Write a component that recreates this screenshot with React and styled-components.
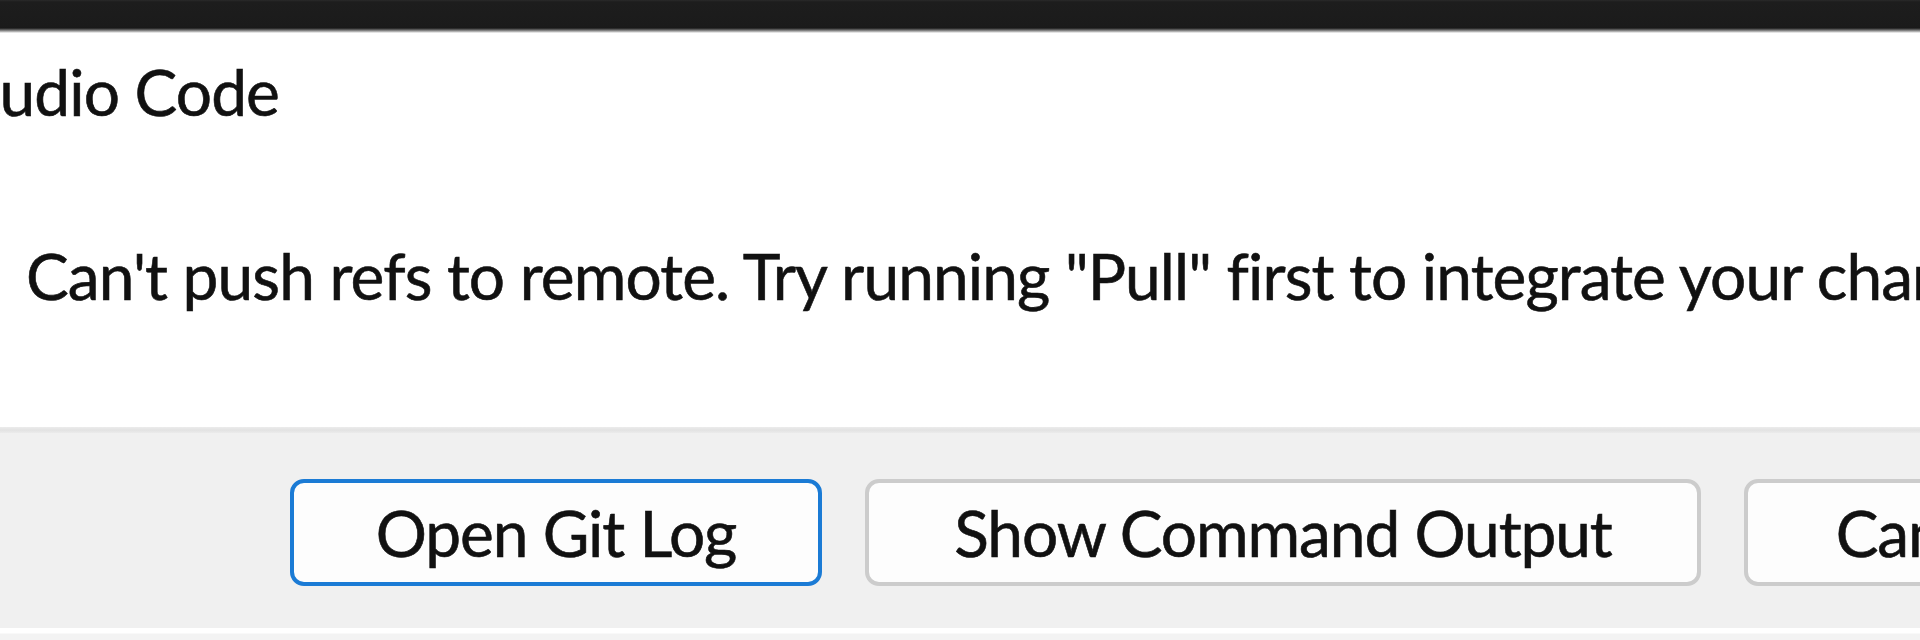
import React from "react";
import styled, { createGlobalStyle } from "styled-components";

const Global = createGlobalStyle`
  html, body { margin: 0; padding: 0; background: #ffffff; }
  body { width: 1920px; height: 640px; overflow: hidden; font-family: Lato, "Open Sans", sans-serif; }
  #root { width: 1920px; height: 640px; }
`;

const Dialog = styled.div`
  width: 1920px;
  height: 640px;
  display: flex;
  flex-direction: column;
  overflow: hidden;
  background: #ffffff;
`;

const TopBar = styled.div`
  height: 33px;
  flex: none;
  background: linear-gradient(
    to bottom,
    #2a2a2a 0px,
    #1d1d1d 2px,
    #1b1b1b 26px,
    #191919 28px,
    #6a6a6a 30px,
    #c8c8c8 32px,
    #ffffff 33px
  );
`;

const Body = styled.div`
  flex: none;
  height: 394px;
  display: flex;
  flex-direction: column;
  padding-top: 19px;
  box-sizing: border-box;
  overflow: hidden;
`;

const Text = styled.div`
  font-size: 64px;
  line-height: 80px;
  letter-spacing: -0.9px;
  color: #111111;
  white-space: nowrap;
  -webkit-text-stroke: 0.6px #111111;
`;

const Title = styled(Text)`
  margin-left: -234px;
`;

const Message = styled(Text)`
  margin-top: 104px;
  padding-left: 26px;
`;

const Separator = styled.div`
  flex: none;
  height: 6px;
  background: linear-gradient(to bottom, #ececec, #e2e2e2 50%, #ebebeb);
`;

const Footer = styled.div`
  flex: none;
  height: 195px;
  box-sizing: border-box;
  background: #f0f0f0;
  display: flex;
  align-items: flex-start;
  gap: 43px;
  padding: 46px 0 0 290px;
  overflow: hidden;
`;

const Button = styled.div`
  flex: none;
  box-sizing: border-box;
  width: ${(p) => p.$w}px;
  height: 107px;
  border-radius: 14px;
  border: 4px solid ${(p) => (p.$primary ? "#1b7bd5" : "#cccccc")};
  background: #fdfdfd;
  display: flex;
  align-items: center;
  justify-content: center;
  font-size: 64px;
  line-height: 80px;
  letter-spacing: -1.1px;
  color: #111111;
  -webkit-text-stroke: 0.6px #111111;
  white-space: nowrap;
`;

const BottomEdge = styled.div`
  flex: 1;
  background: linear-gradient(to bottom, #ffffff 0px, #ffffff 5px, #f3f3f3 6px, #f3f3f3 100%);
`;

export default function App() {
  return (
    <>
      <Global />
      <Dialog>
        <TopBar />
        <Body>
          <Title>Visual Studio Code</Title>
          <Message>
            Can't push refs to remote. Try running "Pull" first to integrate your changes.
          </Message>
        </Body>
        <Separator />
        <Footer>
          <Button $primary $w={532}>Open Git Log</Button>
          <Button $w={836}>Show Command Output</Button>
          <Button $w={366}>Cancel</Button>
        </Footer>
        <BottomEdge />
      </Dialog>
    </>
  );
}
